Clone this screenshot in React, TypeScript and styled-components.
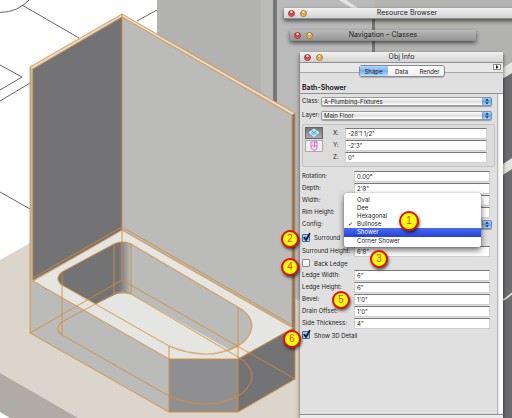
import React, { useState } from "react";
import styled, { createGlobalStyle, css } from "styled-components";

const Global = createGlobalStyle`
  * { box-sizing: border-box; }
  html, body, #root { height: 100%; }
  body {
    margin: 0;
    overflow: hidden;
    background: #bababa;
    color: #1c1c1c;
    font-family: Inter, "DejaVu Sans", sans-serif;
    font-size: 6px;
  }
  button, input, select { font: inherit; color: inherit; margin: 0; }
`;

const Desktop = styled.main`
  position: relative;
  height: 100vh;
  overflow: hidden;
`;

const Scene = styled.svg`
  position: absolute;
  inset: 0;
  width: 100%;
  height: 100%;
`;

/* ---------- palettes ---------- */

const Palette = styled.section<{ $x: number; $y: number; $right: number }>`
  position: absolute;
  left: ${(p) => p.$x}px;
  top: ${(p) => p.$y}px;
  right: ${(p) => p.$right}px;
  box-shadow: 0 2px 4px rgba(0, 0, 0, 0.6);
`;

const ObjectPalette = styled(Palette)`
  bottom: 0;
  display: flex;
  flex-direction: column;
  background: #e0e0e0;
`;

const TitleBar = styled.header<{ $dim?: boolean }>`
  display: grid;
  grid-template-columns: 26px 1fr 26px;
  align-items: center;
  height: 11px;
  flex: none;
  padding: 0 4px;
  border-bottom: 1px solid #8d8d8d;
  background: ${(p) =>
    p.$dim
      ? "linear-gradient(#b9b9b9, #979797)"
      : "linear-gradient(#f1f1f1, #d3d3d3)"};
`;

const Lights = styled.div`
  display: flex;
  gap: 5px;
`;

const Light = styled.button<{ $tone: "red" | "amber" }>`
  width: 7px;
  height: 7px;
  padding: 0;
  border: 1px solid ${(p) => (p.$tone === "red" ? "#a03330" : "#a9722f")};
  border-radius: 50%;
  background: ${(p) =>
    p.$tone === "red"
      ? "radial-gradient(circle at 50% 15%, #fff 0 12%, #d8302c 40%, #f77 100%)"
      : "radial-gradient(circle at 50% 15%, #fff 0 12%, #e39537 40%, #ffe38a 100%)"};
`;

const Title = styled.h2`
  margin: 0;
  font-size: 7px;
  line-height: 10px;
  font-weight: 400;
  text-align: center;
  white-space: nowrap;
`;

const TabStrip = styled.nav`
  position: relative;
  display: flex;
  justify-content: center;
  padding-top: 2px;
  height: 21px;
  flex: none;
  background: linear-gradient(#e8e8e8 9px, #a6a6a6 9px 10px, #e0e0e0 10px);
`;

const Tabs = styled.div`
  display: flex;
  height: 12px;
  border: 1px solid #8a8a8a;
  border-radius: 3px;
  overflow: hidden;
  background: linear-gradient(#fff, #eee);
  box-shadow: 0 1px 1px rgba(0, 0, 0, 0.2);
`;

const Tab = styled.button<{ $on: boolean }>`
  width: 28px;
  padding: 0;
  border: 0;
  font-size: 6px;
  line-height: 9px;
  background: ${(p) =>
    p.$on ? "linear-gradient(#b4d4f8, #73b0f2 50%, #b8e2ff)" : "transparent"};
`;

const MenuArrow = styled.button`
  position: absolute;
  right: 2px;
  top: 1px;
  width: 8px;
  height: 6px;
  padding: 0;
  border: 1px solid #8b8b8b;
  background: #fafafa;
  display: grid;
  place-items: center;
`;

const ObjectName = styled.h3`
  margin: 0;
  padding: 0 2px;
  flex: none;
  height: 10px;
  font-size: 7px;
  line-height: 8px;
  font-weight: 600;
  color: #111;
  border-bottom: 1px solid #8e8e8e;
`;

const Body = styled.div`
  flex: 1;
  display: grid;
  grid-template-columns: 1fr 6px;
  min-height: 0;
`;

const ScrollTrack = styled.div`
  border-left: 1px solid #b5b5b5;
  background: linear-gradient(90deg, #e4e4e4, #fff 40%);
`;

const Form = styled.form`
  padding: 1px 5px 0 2px;
`;

const StatusBar = styled.footer`
  flex: none;
  height: 4px;
  border-top: 1px solid #8e8e8e;
  background: #ececec;
`;

const Row = styled.div<{ $h?: number; $label?: number; $end?: number }>`
  position: relative;
  display: grid;
  grid-template-columns: ${(p) => p.$label ?? 52}px 1fr;
  align-items: center;
  height: ${(p) => p.$h ?? 12}px;
  padding-right: ${(p) => p.$end ?? 2}px;
`;

const Label = styled.label`
  white-space: nowrap;
  line-height: 8px;
`;

const Field = styled.input`
  width: 100%;
  min-width: 0;
  height: 11px;
  padding: 0 2px;
  border: 1px solid #cfcfcf;
  border-top-color: #777;
  background: #fff;
  line-height: 9px;
`;

const PopupWrap = styled.div`
  position: relative;
  display: grid;
  align-items: center;
`;

const Popup = styled.select`
  appearance: none;
  width: 100%;
  height: 9px;
  padding: 0 10px 0 2px;
  border: 1px solid #999;
  border-radius: 2px;
  background: linear-gradient(#fff, #dedede 50%, #fff);
  box-shadow: 0 1px 1px rgba(0, 0, 0, 0.3);
  line-height: 7px;
`;

const Stepper = styled.svg`
  position: absolute;
  right: 0;
  width: 10px;
  height: 9px;
  pointer-events: none;
`;

const Position = styled.fieldset`
  display: grid;
  grid-template-columns: 18px 1fr;
  gap: 10px;
  margin: 1px -3px 3px 0;
  padding: 2px 7px 3px 2px;
  min-width: 0;
  border: 1px solid #c2c2c2;
  border-radius: 2px;
  background: #dcdcdc;
`;

const ViewButtons = styled.div`
  display: flex;
  flex-direction: column;
  gap: 1px;
`;

const ViewButton = styled.button<{ $on?: boolean }>`
  height: 12px;
  padding: 0;
  display: grid;
  place-items: center;
  border: 1px solid ${(p) => (p.$on ? "#666" : "#aaa")};
  background: ${(p) => (p.$on ? "linear-gradient(#757575, #aaa)" : "#eee")};
  svg { display: block; width: 12px; height: 10px; }
`;

const Coords = styled.div`
  min-width: 0;
`;

const CheckRow = styled.label<{ $h: number }>`
  display: flex;
  align-items: center;
  gap: 4px;
  height: ${(p) => p.$h}px;
`;

const Check = styled.input`
  appearance: none;
  width: 8px;
  height: 8px;
  border: 1px solid #8a8a8a;
  border-radius: 1px;
  background: linear-gradient(#fff, #ececec);
  &:checked {
    border-color: #4869a0;
    background: linear-gradient(#b4d3f7, #63a2ea 50%, #a9d9ff);
  }
`;

const CheckBox = styled.span`
  position: relative;
  display: grid;
  svg {
    position: absolute;
    left: 0;
    top: -2px;
    width: 10px;
    height: 10px;
    pointer-events: none;
  }
`;

const Menu = styled.ul`
  position: absolute;
  z-index: 2;
  left: 42px;
  right: 11px;
  top: -25px;
  margin: 0;
  padding: 3px 0 2px;
  list-style: none;
  border-radius: 2px;
  background: #fff;
  box-shadow: 0 3px 6px rgba(0, 0, 0, 0.6), 0 0 1px rgba(0, 0, 0, 0.5);
`;

const MenuItem = styled.button<{ $active?: boolean }>`
  display: grid;
  grid-template-columns: 9px 1fr;
  width: 100%;
  height: 8px;
  padding: 0 0 0 4px;
  border: 0;
  background: transparent;
  line-height: 8px;
  text-align: left;
  ${(p) =>
    p.$active &&
    css`
      height: 9px;
      color: #fff;
      background: linear-gradient(#4a6cf0, #2440d6);
    `}
`;

const MenuTick = styled.span`
  font-family: "DejaVu Sans", sans-serif;
  color: #000;
`;

const Badge = styled.span<{ $x: number; $y: number; $size?: number }>`
  position: absolute;
  z-index: 3;
  left: ${(p) => p.$x}px;
  top: ${(p) => p.$y}px;
  width: ${(p) => p.$size ?? 18}px;
  height: ${(p) => p.$size ?? 18}px;
  display: grid;
  place-items: center;
  border: 2px solid #e80c0c;
  border-radius: 50%;
  background: #ffff08;
  box-shadow: 1px 2px 3px rgba(0, 0, 0, 0.6);
  color: #f0380c;
  font: 10px/12px "Liberation Sans", sans-serif;
`;

const StepperIcon = () => (
  <Stepper viewBox="0 0 10 9">
    <defs>
      <linearGradient id="step" x2="0" y2="1">
        <stop stopColor="#b7d6fa" />
        <stop offset=".5" stopColor="#6aa5ec" />
        <stop offset="1" stopColor="#b4e0ff" />
      </linearGradient>
    </defs>
    <rect x=".5" y=".5" width="9" height="8" rx="1.5" fill="url(#step)" stroke="#5f83b5" strokeWidth=".7" />
    <path d="M5 1.5 6.7 3.8H3.3zM5 7.5 3.3 5.2h3.4z" fill="#1e3455" />
  </Stepper>
);

const TickBox = ({ label, on, h }: { label: string; on?: boolean; h: number }) => {
  const [checked, setChecked] = useState(!!on);
  return (
    <CheckRow $h={h}>
      <CheckBox>
        <Check type="checkbox" checked={checked} onChange={() => setChecked(!checked)} />
        {checked && (
          <svg viewBox="0 0 10 10">
            <path d="M2 5.2 4 8 8 1.2" fill="none" stroke="#101820" strokeWidth="1.6" />
          </svg>
        )}
      </CheckBox>
      {label}
    </CheckRow>
  );
};

const TextRow = ({ id, label, value, h }: { id: string; label: string; value: string; h?: number }) => (
  <Row $h={h}>
    <Label htmlFor={id}>{label}</Label>
    <Field id={id} defaultValue={value} />
  </Row>
);

const WindowBar = ({ title, dim }: { title: string; dim?: boolean }) => (
  <TitleBar $dim={dim}>
    <Lights>
      <Light $tone="red" aria-label="Close" />
      <Light $tone="amber" aria-label="Minimize" />
    </Lights>
    <Title>{title}</Title>
  </TitleBar>
);

const BathScene = () => (
  <Scene viewBox="0 0 512 418" preserveAspectRatio="xMinYMin slice" aria-hidden="true">
    <defs>
      <linearGradient id="corner">
        <stop stopColor="#737376" />
        <stop offset=".35" stopColor="#77777b" />
        <stop offset="1" stopColor="#bbbcba" />
      </linearGradient>
    </defs>
    <rect width="512" height="418" fill="#bababa" />
    <rect width="157" height="418" fill="#fff" />
    <rect x="157" width="104" height="120" fill="#b2b2b1" />
    <rect x="261" width="12" height="120" fill="#bbbcba" />
    <rect x="273" width="4" height="110" fill="#77777a" />
    <rect x="375" width="137" height="70" fill="#b3b3b2" />
    <rect x="372" y="17" width="3" height="40" fill="#77777a" />
    <path d="M339 0h7l12 8h-6z" fill="#e4e4e0" />
    <path d="M500 80 512 73V418H500z" fill="#6c6c6e" />
    <path d="M500 70 512 62V73L500 80zM500 166 512 158V169L500 177z" fill="#e4e4df" />
    <path d="M500 301Q507 299 512 293" fill="none" stroke="#e4e4df" strokeWidth="1.5" />

    <g fill="none" stroke="#666" strokeWidth="1">
      <path d="M0 12.5Q18 12 29 0M22 5 79 38M137 21 157 10M0 65 22 77 0 90M0 101 30 83M0 192 30 209" />
    </g>

    <path d="M0 260 30 243 300 300V418H0z" fill="#dcd5cb" />
    <path d="M0 373 78 418H0z" fill="#b0aba5" />
    <path d="M0 412 10 418H0z" fill="#fff" />

    <path d="M30 67 122 14 295 113V379L238 412H169L30 333z" fill="#bbbcba" />
    <path d="M30 67 122 14 295 113 292 115 122 17 33 69z" fill="#e6ded2" />
    <path d="M33 69 122 17V231L33 280z" fill="#737376" />
    <path d="M292 115 295 113V327L292 328z" fill="#77777a" />
    <path d="M33 281 122 230 293 328 238 359H169z" fill="#e5e6e2" />

    <path d="M62 285Q54 279 62 272L114 244Q122 240 131 244L238 307Q252 315 252 327 250 339 238 346L230 350 131 294H116L96 304z" fill="#bbbcba" />
    <path d="M62 285Q54 279 62 272L114 244V295L96 304z" fill="#737376" />
    <path d="M114 244Q122 240 131 244V294Q122 290 114 295z" fill="url(#corner)" />

    <path d="M169 359H238V412H169z" fill="#8f8f92" />
    <path d="M238 359 295 327V379L238 412z" fill="#737376" />

    <g fill="none" stroke="#d38d36" strokeOpacity=".62" strokeWidth="1.4" strokeLinejoin="round">
      <path d="M30 67 122 14 295 113V379L238 412H169L30 333z" />
      <path d="M32.500 280V69L122 17 292 115V326" />
      <path d="M122 14V280M30 333 122 280 295 379M33 278 122 227 292 325" />
      <path d="M33 281 122 230 293 328 238 359H169z" />
      <path d="M62 285Q54 279 62 272L114 244Q122 240 131 244L238 307Q252 315 252 327 250 339 238 346 220 355 203 354 185 353 169 346z" />
      <path d="M62 335Q54 329 62 322L114 294Q122 290 131 294L238 357Q252 365 252 377 250 389 238 396 220 405 203 404 185 403 169 396z" />
      <path d="M62 273V335M114 244V294M131 244V294M238 307V412M169 346V412" />
    </g>
  </Scene>
);

const CONFIGS = ["Oval", "Dee", "Hexagonal", "Bullnose", "Shower", "Corner Shower"];

export default function App() {
  const [tab, setTab] = useState("Shape");
  const [config, setConfig] = useState("Bullnose");

  return (
    <>
      <Global />
      <Desktop>
        <BathScene />

        <Palette $x={284} $y={8} $right={-18}>
          <WindowBar title="Resource Browser" />
        </Palette>
        <Palette $x={290} $y={30} $right={36}>
          <WindowBar title="Navigation – Classes" dim />
        </Palette>

        <ObjectPalette $x={300} $y={52} $right={9}>
          <WindowBar title="Obj Info" />
          <TabStrip>
            <Tabs>
              {["Shape", "Data", "Render"].map((t) => (
                <Tab key={t} $on={t === tab} onClick={() => setTab(t)}>
                  {t}
                </Tab>
              ))}
            </Tabs>
            <MenuArrow aria-label="Palette menu">
              <svg width="4" height="4" viewBox="0 0 4 4">
                <path d="M1 0 3.500 2 1 4z" fill="#111" />
              </svg>
            </MenuArrow>
          </TabStrip>
          <ObjectName>Bath-Shower</ObjectName>
          <Body>
            <Form>
              <Row $h={12} $label={19} $end={0}>
                <Label htmlFor="class">Class:</Label>
                <PopupWrap>
                  <Popup id="class">
                    <option>A-Plumbing-Fixtures</option>
                  </Popup>
                  <StepperIcon />
                </PopupWrap>
              </Row>
              <Row $h={16} $label={19} $end={0}>
                <Label htmlFor="layer">Layer:</Label>
                <PopupWrap>
                  <Popup id="layer">
                    <option>Main Floor</option>
                  </Popup>
                  <StepperIcon />
                </PopupWrap>
              </Row>
              <Position>
                <ViewButtons>
                  <ViewButton type="button" $on aria-label="Plan position">
                    <svg viewBox="0 0 12 10">
                      <path d="M6 1 11 4.500 6 8.500 1 4.500z" fill="#8fe0f8" stroke="#d8f8ff" />
                      <path d="M3.500 2.800 8.500 6.700M8.500 2.800 3.500 6.700" stroke="#3b9fc8" strokeWidth=".8" />
                    </svg>
                  </ViewButton>
                  <ViewButton type="button" aria-label="Elevation position">
                    <svg viewBox="0 0 12 10">
                      <path d="M3 1V7.500L6.500 9.500 9 8V1H6.500V6M3 1H9M3 5H9" fill="#fbe3f8" stroke="#d855c8" strokeWidth=".8" />
                    </svg>
                  </ViewButton>
                </ViewButtons>
                <Coords>
                  <Row $label={12} $end={0}>
                    <Label htmlFor="x">X:</Label>
                    <Field id="x" defaultValue={"-28'1 1/2\""} />
                  </Row>
                  <Row $label={12} $end={0}>
                    <Label htmlFor="y">Y:</Label>
                    <Field id="y" defaultValue={"-2'3\""} />
                  </Row>
                  <Row $label={12} $end={0}>
                    <Label htmlFor="z">Z:</Label>
                    <Field id="z" defaultValue={'0"'} />
                  </Row>
                </Coords>
              </Position>
              <TextRow id="rotation" label="Rotation:" value="0.00°" />
              <TextRow id="depth" label="Depth:" value={"2'8\""} />
              <TextRow id="width" label="Width:" value={"5'0\""} />
              <TextRow id="rim" label="Rim Height:" value={"1'6\""} />
              <Row $end={0}>
                <Label htmlFor="config">Config:</Label>
                <PopupWrap>
                  <Popup id="config" value={config} onChange={(e) => setConfig(e.target.value)}>
                    {CONFIGS.map((c) => (
                      <option key={c}>{c}</option>
                    ))}
                  </Popup>
                  <StepperIcon />
                </PopupWrap>
                <Menu>
                  {CONFIGS.map((c) => (
                    <li key={c}>
                      <MenuItem type="button" $active={c === "Shower"} onClick={() => setConfig(c)}>
                        <MenuTick>{c === config ? "✓" : ""}</MenuTick>
                        {c}
                      </MenuItem>
                    </li>
                  ))}
                </Menu>
              </Row>
              <TickBox label="Surround" on h={15} />
              <TextRow id="surround-height" label="Surround Height:" value={"6'8\""} />
              <TickBox label="Back Ledge" h={12} />
              <TextRow id="ledge-width" label="Ledge Width:" value={'6"'} />
              <TextRow id="ledge-height" label="Ledge Height:" value={'6"'} />
              <TextRow id="bevel" label="Bevel:" value={"1'0\""} />
              <TextRow id="drain" label="Drain Offset:" value={"1'0\""} />
              <TextRow id="side" label="Side Thickness:" value={'4"'} />
              <TickBox label="Show 3D Detail" on h={12} />
            </Form>
            <ScrollTrack />
          </Body>
          <StatusBar />
        </ObjectPalette>

        <Badge $x={399} $y={211} $size={20}>1</Badge>
        <Badge $x={281} $y={230}>2</Badge>
        <Badge $x={370} $y={250}>3</Badge>
        <Badge $x={281} $y={258}>4</Badge>
        <Badge $x={332} $y={291}>5</Badge>
        <Badge $x={283} $y={330}>6</Badge>
      </Desktop>
    </>
  );
}
